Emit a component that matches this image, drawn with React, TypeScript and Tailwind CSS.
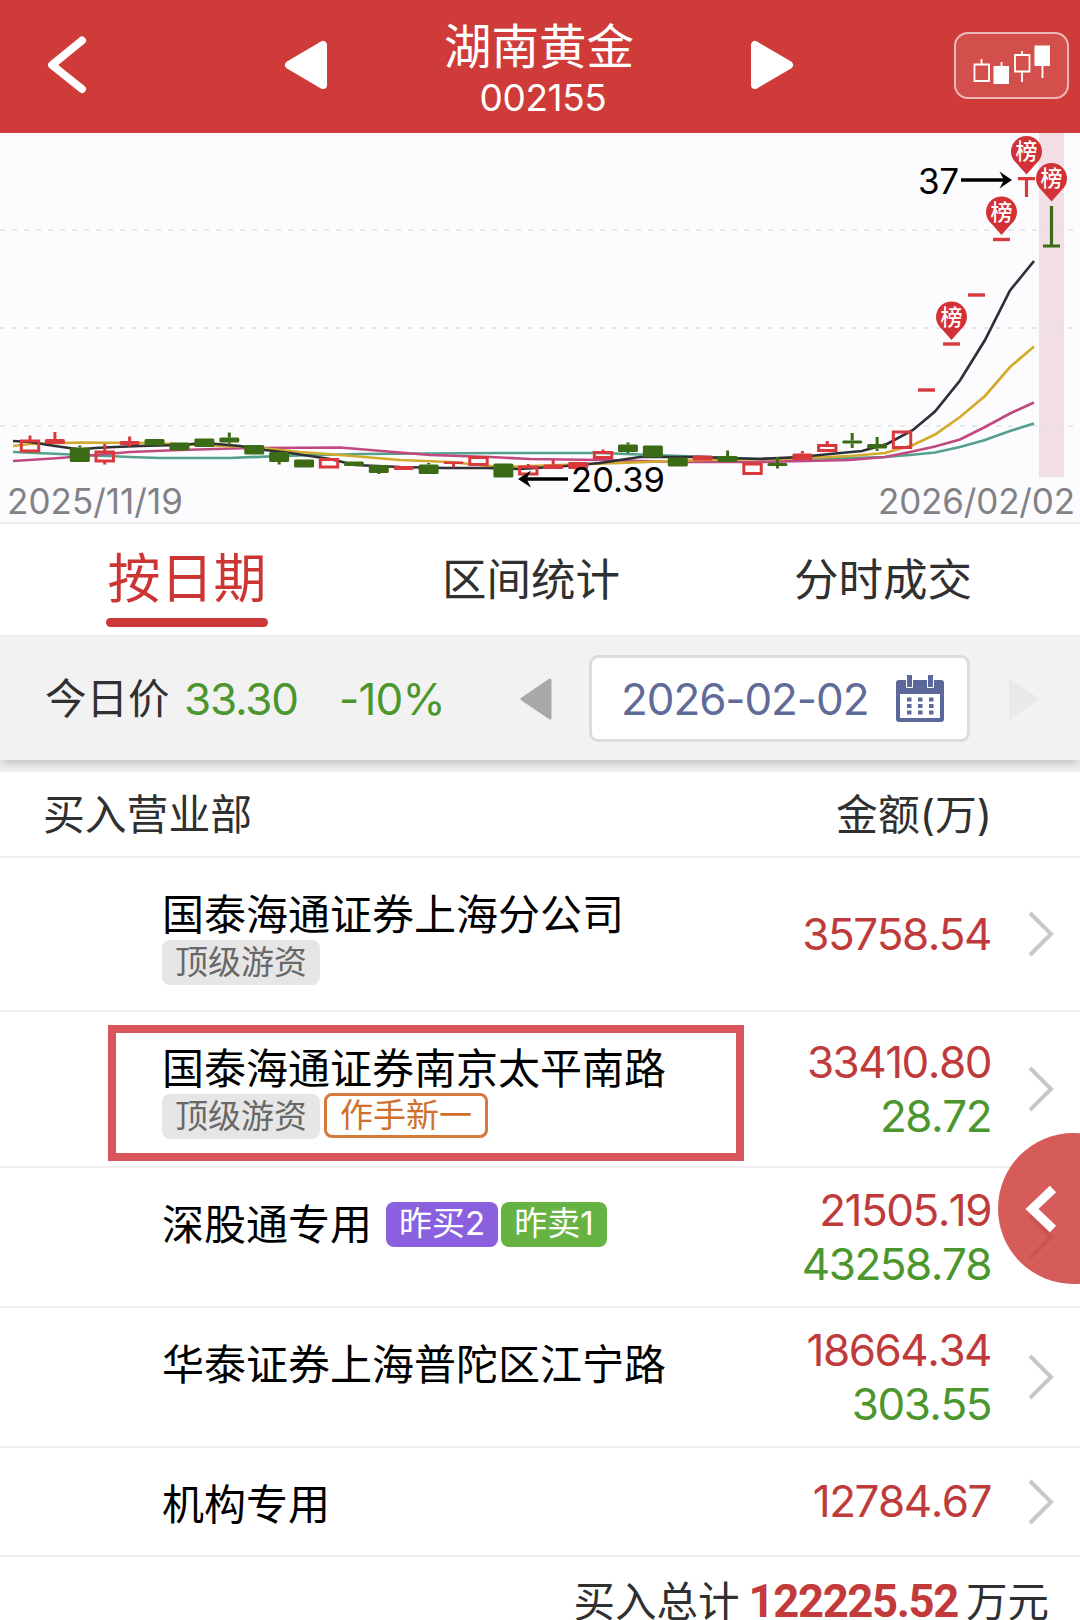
import React from "react";

type Candle = {
  kind: "up" | "upFill" | "down";
  top: number;
  bottom: number;
  high?: number;
  low?: number;
};

const UP = "#d8393c";
const DOWN = "#3c6b17";
const FIRST_X = 30;
const STEP = 24.915;

const candles: Candle[] = [
  { kind: "up", top: 441, bottom: 451, high: 435.5 },
  { kind: "upFill", top: 439, bottom: 444, high: 432 },
  { kind: "down", top: 447.5, bottom: 462, high: 445.5 },
  { kind: "up", top: 452, bottom: 461, high: 444, low: 464.5 },
  { kind: "upFill", top: 441, bottom: 445, high: 436.5, low: 446.5 },
  { kind: "down", top: 439, bottom: 445.5 },
  { kind: "down", top: 442.5, bottom: 450.5 },
  { kind: "down", top: 438.5, bottom: 447 },
  { kind: "down", top: 437.5, bottom: 442.5, high: 432.5, low: 445 },
  { kind: "down", top: 445, bottom: 454.5 },
  { kind: "down", top: 452, bottom: 462, low: 464.5 },
  { kind: "down", top: 459.5, bottom: 467.5 },
  { kind: "up", top: 459.5, bottom: 467 },
  { kind: "down", top: 461.5, bottom: 466 },
  { kind: "down", top: 465, bottom: 473, low: 474 },
  { kind: "upFill", top: 466, bottom: 470 },
  { kind: "down", top: 464.5, bottom: 474, high: 463 },
  { kind: "upFill", top: 461.5, bottom: 464, low: 467.5 },
  { kind: "up", top: 457.5, bottom: 464.5 },
  { kind: "down", top: 463.5, bottom: 477.5 },
  { kind: "up", top: 467, bottom: 474, high: 464 },
  { kind: "upFill", top: 464.5, bottom: 469, high: 460 },
  { kind: "upFill", top: 462, bottom: 469 },
  { kind: "up", top: 452.5, bottom: 457.5, high: 449.5 },
  { kind: "down", top: 444.5, bottom: 452, high: 442.5, low: 453 },
  { kind: "down", top: 445.5, bottom: 457.5 },
  { kind: "down", top: 457.5, bottom: 466.5 },
  { kind: "upFill", top: 455.5, bottom: 460.5 },
  { kind: "down", top: 456, bottom: 462, high: 450.5 },
  { kind: "up", top: 464, bottom: 473.5 },
  { kind: "down", top: 463, bottom: 466, high: 457, low: 468.5 },
  { kind: "upFill", top: 453.5, bottom: 460, high: 451 },
  { kind: "up", top: 445.5, bottom: 450.5, high: 441 },
  { kind: "down", top: 440.5, bottom: 443.5, high: 433, low: 448 },
  { kind: "down", top: 444, bottom: 448.5, high: 437, low: 451 },
  { kind: "up", top: 432, bottom: 447.5 },
];

// limit-up days: no body, just a flat line
const flats = [
  { x: 926.5, y: 390 },
  { x: 951.5, y: 344 },
  { x: 976.5, y: 295 },
  { x: 1001.5, y: 239.5 },
];

const pins = [
  { x: 951.5, y: 317 },
  { x: 1001.5, y: 212 },
  { x: 1026.5, y: 151.5 },
  { x: 1051.5, y: 178.5 },
];

const averages = [
  {
    color: "#55a08c",
    points:
      "13,452 60,454 130,457 160,458 230,458 280,456 360,454 500,453 600,453 680,456 760,459 850,458 885,457 910,455 935,452.5 960,447 985,440 1010,431 1034,423.5",
  },
  {
    color: "#c04a80",
    points:
      "13,461 60,458 130,452 180,450 250,448 340,447.5 370,450 430,455 490,457 530,459 600,460 680,462 760,462 850,460 885,457 910,452 935,446.5 960,439.5 985,427 1010,413.5 1034,402.5",
  },
  {
    color: "#d3ab2c",
    points:
      "13,446 30,444 80,442.5 150,443 250,447 300,452 340,455 400,460 450,462 500,467 560,465 620,463 700,460 780,459 850,456 885,453 913,445 935,434.5 960,417 985,396 1010,367 1034,346.5",
  },
  {
    color: "#2e3036",
    points:
      "13,441 30,442 55,446 80,449.5 95,448 115,447 140,446 180,445 205,443 240,446 265,450 290,453 310,456 330,459 355,465 400,467 445,468 485,468 520,469 560,466.5 600,463 640,457 700,457 725,458 760,459 800,457 830,454 862,451 887,444 913,430 935,411.5 960,380.5 985,340 1010,290.5 1034,261",
  },
];

const CandleShape = ({ candle, x }: { candle: Candle; x: number }) => {
  const { kind, top, bottom, high, low } = candle;
  const color = kind === "down" ? DOWN : UP;
  return (
    <g stroke={color}>
      {high !== undefined && <line x1={x} x2={x} y1={high} y2={top} strokeWidth={3} />}
      {low !== undefined && <line x1={x} x2={x} y1={bottom} y2={low} strokeWidth={3} />}
      {kind === "up" ? (
        <rect x={x - 8.7} y={top} width={17.4} height={bottom - top} fill="none" strokeWidth={3} />
      ) : (
        <rect x={x - 10} y={top} width={20} height={bottom - top} rx={1.5} fill={color} stroke="none" />
      )}
    </g>
  );
};

const KLineChart = () => (
  <svg
    className="block w-full h-[389px] bg-[#fcfcfe] font-['Inter','Noto_Sans_CJK_SC',sans-serif]"
    viewBox="0 133 1080 389"
  >
    <rect x={1039} y={133} width={25} height={344.5} fill="#f2dfe6" />
    {[230, 328, 426].map((y) => (
      <line key={y} x1={0} x2={1080} y1={y} y2={y} stroke="#dedfe3" strokeWidth={1.5} strokeDasharray="5 7" />
    ))}
    {averages.map((a) => (
      <polyline key={a.color} points={a.points} fill="none" stroke={a.color} strokeWidth={2.7} />
    ))}
    {candles.map((c, i) => (
      <CandleShape key={i} candle={c} x={FIRST_X + STEP * i} />
    ))}
    {flats.map((f) => (
      <rect key={f.x} x={f.x - 8.5} y={f.y - 1.7} width={17} height={3.4} fill={UP} />
    ))}
    <path d="M1018 178.7H1035M1026.5 178.7V197" stroke={UP} strokeWidth={3.2} />
    <path d="M1043 246H1060M1051.5 206V246" stroke={DOWN} strokeWidth={3.2} />
    {pins.map((p) => (
      <g key={p.x}>
        <path
          d={`M${p.x} ${p.y + 23}L${p.x - 9.5} ${p.y + 12.2}A15.5 15.5 0 1 1 ${p.x + 9.5} ${p.y + 12.2}Z`}
          fill="#d23236"
        />
        <text x={p.x} y={p.y + 7.8} textAnchor="middle" fontSize={22} fontWeight={500} fill="#fff">
          榜
        </text>
      </g>
    ))}
    <g stroke="#000" strokeWidth={3.4} fill="none">
      <path d="M961 180H1008" />
      <path d="M568 479H523" />
    </g>
    <path d="M1012 180L999.500 171.500L1004 180L999.500 188.500Z" fill="#000" />
    <path d="M518 479L531 470.500L526.500 479L531 487.500Z" fill="#000" />
    <text x={918} y={193.5} fontSize={35} fontWeight={380} fill="#000" textLength={41}>37</text>
    <text x={571} y={492} fontSize={34.5} fontWeight={380} fill="#000" textLength={94}>20.39</text>
    <text x={7} y={514} fontSize={35} fontWeight={380} fill="#828286" textLength={176}>
      2025/11/19
    </text>
    <text x={878} y={514} fontSize={35} fontWeight={380} fill="#828286" textLength={197}>
      2026/02/02
    </text>
  </svg>
);

const Header = () => (
  <header className="flex h-[133px] items-center bg-[#ce3b38] pb-[3px] pl-[47px] pr-[11px] text-white">
    <svg className="h-[58px] w-10" viewBox="0 0 40 58" fill="none" stroke="#fff" strokeWidth={8} strokeLinecap="round" strokeLinejoin="round">
      <path d="M35 4.500L5 29L35 53" />
    </svg>
    <svg className="ml-[197px] h-[50px] w-11" viewBox="0 0 44 50" fill="#fff" stroke="#fff" strokeWidth={8} strokeLinejoin="round">
      <path d="M39 5V45L5 25Z" />
    </svg>
    <div className="flex flex-1 flex-col items-center pt-[10px]">
      <h1 className="text-[47.500px] leading-[56px]">湖南黄金</h1>
      <div className="ml-2 text-[37px] leading-[46px] tracking-[-0.4px]">002155</div>
    </div>
    <svg className="mr-[160px] h-[50px] w-11" viewBox="0 0 44 50" fill="#fff" stroke="#fff" strokeWidth={8} strokeLinejoin="round">
      <path d="M5 5V45L39 25Z" />
    </svg>
    <button className="h-[67px] w-[115px] rounded-[14px] border-2 border-white/60 bg-white/10">
      <svg className="h-full w-full" viewBox="957 34 111 63" fill="none" stroke="#fff" strokeWidth={1.8}>
        <path d="M982.5 59V64M975.500 64.500H990V81H975.500ZM1002.5 62V67M1023 51V55M1023 71.500V82M1016 55H1030.500V71.500H1016ZM1043.500 65V78" />
        <path d="M994.500 66H1010V84H994.500ZM1035.500 45.500H1051V66H1035.500Z" fill="#fff" stroke="none" />
      </svg>
    </button>
  </header>
);

const tabs = ["按日期", "区间统计", "分时成交"];

const Tabs = () => (
  <nav className="flex h-[115px] border-y-2 border-[#ededee] pl-[106px]">
    {tabs.map((tab, i) =>
      i === 0 ? (
        <div key={tab} className="flex w-[162px] flex-col items-center">
          <span className="mt-4 text-[53px] leading-[78px] text-[#cb3635]">{tab}</span>
          <span className="h-[9px] w-full rounded-full bg-[#cb3a38]" />
        </div>
      ) : (
        <span
          key={tab}
          className="ml-[174px] mt-[15px] text-[44.500px] leading-[82px] text-[#303030]"
        >
          {tab}
        </span>
      )
    )}
  </nav>
);

const CalendarIcon = () => (
  <svg className="h-[47px] w-12" viewBox="0 0 48 47" fill="#5c6899">
    <path fillRule="evenodd" d="M3 5H45Q48 5 48 8V44Q48 47 45 47H3Q0 47 0 44V8Q0 5 3 5ZM4 19V43H44V19Z" />
    <path d="M10.500 -1H16.500V12.500H10.500ZM31.500 -1H37.500V12.500H31.500Z" stroke="#fff" strokeWidth={1} />
    {[22.5, 29, 35.5].map((y) =>
      [11, 22, 33].map((x) => <rect key={`${x}-${y}`} x={x} y={y} width={4.5} height={4} />)
    )}
  </svg>
);

const PriceBar = () => (
  <section className="h-[135px] bg-[#f0f0f0]">
    <div className="flex h-[123px] items-center bg-[#f2f2f2] pl-[45px] shadow-[0_6px_8px_-2px_rgba(0,0,0,0.18)]">
      <span className="w-[139px] pt-[2px] text-[41.500px] text-[#303030]">今日价</span>
      <span className="w-[155px] text-[44px] font-[380] tracking-[-1.2px] text-[#4b962d]">33.30</span>
      <span className="w-[181px] text-[44px] font-[380] tracking-[-0.8px] text-[#4b962d]">-10%</span>
      <svg className="h-[42px] w-8" viewBox="0 0 32 42" fill="#a9a9a9" stroke="#a9a9a9" strokeWidth={3} strokeLinejoin="round">
        <path d="M30 2V40L2 21Z" />
      </svg>
      <div className="ml-[37px] flex h-[87px] w-[381px] items-center justify-between rounded-[9px] border-[3px] border-[#dcdcdc] bg-white pl-[29px] pr-[23px]">
        <span className="whitespace-nowrap text-[44px] font-[380] tracking-[-1.100px] text-[#5f6b98]">2026-02-02</span>
        <CalendarIcon />
      </div>
      <svg className="ml-[39px] h-[42px] w-8" viewBox="0 0 32 42" fill="#e9e9e9">
        <path d="M0 0V42L31 21Z" />
      </svg>
    </div>
  </section>
);

type Tag = { label: string; tone: "gray" | "orange" | "purple" | "green" };

const toneClass: Record<Tag["tone"], string> = {
  gray: "bg-[#e6e6e6] text-[#686868] px-[13px]",
  orange: "border-[3px] border-[#d5793a] text-[#d0702b] px-[13px] -mt-px",
  purple: "bg-[#8a60df] text-white px-[13px]",
  green: "bg-[#66b344] text-white px-[13px]",
};

const TagBadge = ({ tag }: { tag: Tag }) => (
  <span
    className={`flex h-[45px] items-center rounded-lg text-[33px] whitespace-nowrap ${toneClass[tag.tone]}`}
  >
    {tag.label}
  </span>
);

type Seat = {
  name: string;
  height: string;
  below?: Tag[];
  inline?: Tag[];
  buy: string;
  sell?: string;
  marked?: boolean;
};

const seats: Seat[] = [
  {
    name: "国泰海通证券上海分公司",
    height: "h-[154px]",
    below: [{ label: "顶级游资", tone: "gray" }],
    buy: "35758.54",
  },
  {
    name: "国泰海通证券南京太平南路",
    height: "h-[156px]",
    below: [
      { label: "顶级游资", tone: "gray" },
      { label: "作手新一", tone: "orange" },
    ],
    buy: "33410.80",
    sell: "28.72",
    marked: true,
  },
  {
    name: "深股通专用",
    height: "h-[140px]",
    inline: [
      { label: "昨买2", tone: "purple" },
      { label: "昨卖1", tone: "green" },
    ],
    buy: "21505.19",
    sell: "43258.78",
  },
  { name: "华泰证券上海普陀区江宁路", height: "h-[140px]", buy: "18664.34", sell: "303.55" },
  { name: "机构专用", height: "h-[109px]", buy: "12784.67" },
];

const SeatRow = ({ seat }: { seat: Seat }) => (
  <li className={`relative flex border-b-2 border-[#efefef] pl-[162px] ${seat.height}`}>
    {seat.marked && (
      <div className="absolute left-[108px] top-[13px] h-[136px] w-[636px] border-8 border-[#d9555b]" />
    )}
    <div className="flex-1 pt-[30px]">
      <div className="flex items-center">
        <span className="pt-px text-[42px] leading-[51px] text-black">{seat.name}</span>
        {seat.inline && (
          <div className="ml-[14px] flex gap-[3px]">
            {seat.inline.map((t) => (
              <TagBadge key={t.label} tag={t} />
            ))}
          </div>
        )}
      </div>
      {seat.below && (
        <div className="flex gap-1">
          {seat.below.map((t) => (
            <TagBadge key={t.label} tag={t} />
          ))}
        </div>
      )}
    </div>
    <div className="flex flex-col justify-center pb-px text-right text-[44px] font-[380] leading-[54px] tracking-[-1.5px] [font-kerning:none]">
      <span className="text-[#bf3b3b]">{seat.buy}</span>
      {seat.sell && <span className="text-[#4b962d]">{seat.sell}</span>}
    </div>
    <svg
      className="ml-[37px] mr-[25px] h-[46px] w-[27px] self-center"
      viewBox="0 0 27 46"
      fill="none"
      stroke="#c8c8c8"
      strokeWidth={4}
    >
      <path d="M2 2L23 23L2 44" />
    </svg>
  </li>
);

export default function App() {
  return (
    <div className="relative h-[1620px] w-[1080px] overflow-hidden bg-white font-['Inter','Noto_Sans_CJK_SC',sans-serif]">
      <Header />
      <KLineChart />
      <Tabs />
      <PriceBar />
      <div className="flex h-[86px] items-center justify-between border-b-2 border-[#efefef] pl-[43px] pr-[88px] pt-[2px] text-[41.800px] text-[#303030]">
        <span>买入营业部</span>
        <span>金额(万)</span>
      </div>
      <ul>
        {seats.map((seat) => (
          <SeatRow key={seat.name} seat={seat} />
        ))}
      </ul>
      <footer className="flex items-center justify-end pr-[31px] pt-[15px] text-[41.500px] leading-[60px] text-[#303030]">
        <span>买入总计</span>
        <span className="ml-[9px] mr-[8px] font-['Roboto',sans-serif] text-[45.500px] font-bold tracking-[-1.4px] text-[#c23a39]">
          122225.52
        </span>
        <span>万元</span>
      </footer>
      {/* drawer handle, half hidden past the right edge */}
      <button className="absolute left-[998px] top-[1133px] h-[151px] w-[151px] rounded-full bg-[#ce3b38]/83">
        <svg className="ml-[27px] h-12 w-8" viewBox="0 0 32 48" fill="none" stroke="#fff" strokeWidth={9}>
          <path d="M28 4L7 24L28 44" />
        </svg>
      </button>
    </div>
  );
}
